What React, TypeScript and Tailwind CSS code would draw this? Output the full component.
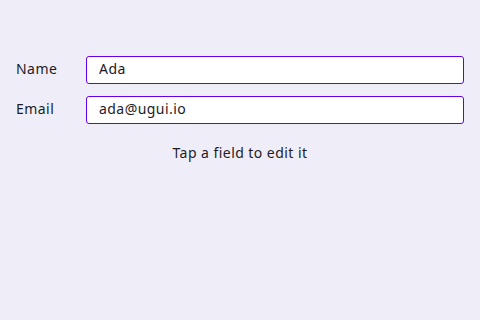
export default function App() {
  return (
    <div className="w-[480px] h-[320px] bg-[#efeef8] text-[#1d1b26] text-[14px] tracking-[0.45px] flex flex-col pt-[56px] px-4" style={{ fontFamily: "'Noto Sans', sans-serif" }}>
      <div className="flex flex-col gap-3">
        <div className="flex items-center">
          <div className="w-[70px] leading-[20px] -mt-[2px]">Name</div>
          <div className="flex-1 h-[28px] bg-white border border-[#6200ee] rounded-[3px] flex items-center px-3"><span className="leading-[20px] -mt-[2px]">Ada</span></div>
        </div>
        <div className="flex items-center">
          <div className="w-[70px] leading-[20px] -mt-[2px]">Email</div>
          <div className="flex-1 h-[28px] bg-white border border-[#6200ee] rounded-[3px] flex items-center px-3"><span className="leading-[20px] -mt-[2px]">ada@ugui.io</span></div>
        </div>
      </div>
      <div className="text-center mt-[19px] leading-[20px]">Tap a field to edit it</div>
    </div>
  );
}
